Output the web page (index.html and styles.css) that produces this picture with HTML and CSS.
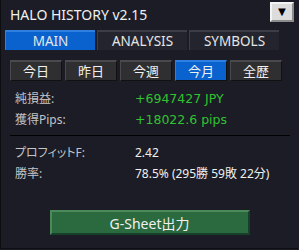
FILE: index.html
```html
<!DOCTYPE html>
<html lang="ja">
<head>
  <meta charset="UTF-8">
  <title>HALO HISTORY</title>
  <link rel="stylesheet" href="styles.css">
</head>
<body>
  <div class="panel">
    <div class="title-bar">
      <span class="title">HALO HISTORY v2.15</span>
      <button class="dropdown">&#9660;</button>
    </div>

    <!-- tabs -->
    <div class="tabs">
      <div class="tab active">MAIN</div>
      <div class="tab">ANALYSIS</div>
      <div class="tab">SYMBOLS</div>
    </div>

    <!-- period -->
    <div class="periods">
      <div class="period">今日</div>
      <div class="period">昨日</div>
      <div class="period">今週</div>
      <div class="period active">今月</div>
      <div class="period">全歴</div>
    </div>

    <div class="stats stats-top">
      <div class="row"><span class="label">純損益:</span><span class="value green">+6947427 JPY</span></div>
      <div class="row"><span class="label">獲得Pips:</span><span class="value green">+18022.6 pips</span></div>
    </div>
    <div class="divider"></div>
    <div class="stats">
      <div class="row"><span class="label">プロフィットF:</span><span class="value">2.42</span></div>
      <div class="row"><span class="label">勝率:</span><span class="value">78.5% (295勝 59敗 22分)</span></div>
    </div>

    <div class="footer">
      <button class="export">G-Sheet出力</button>
    </div>
  </div>
</body>
</html>
```

FILE: styles.css
```css
body {
  margin: 0;
  background: #1b1c25;
  font-family: "Noto Sans", "Noto Sans CJK JP", sans-serif;
  font-size: 12px;
  color: #e6e6e6;
}
.panel {
  width: 298px;
  height: 249px;
  box-sizing: border-box;
  border-left: 1px solid #0d0e12;
  border-bottom: 1px solid #0d0e12;
  background: #1b1c25;
  padding: 2px 4px 0 4px;
}
.title-bar {
  display: flex;
  justify-content: space-between;
  align-items: flex-start;
  height: 28px;
}
.title {
  margin: 3px 0 0 5px;
  font-size: 14px;
  color: #f0f0f0;
}
.dropdown {
  width: 24px;
  height: 20px;
  padding: 0;
  background: #dcdcdc;
  border: 2px solid;
  border-color: #f4f4f4 #8c8c8c #8c8c8c #f4f4f4;
  color: #000;
  font-size: 13px;
  line-height: 14px;
}
.tabs {
  display: flex;
  gap: 2px;
}
.tab {
  width: 90px;
  height: 20px;
  box-sizing: border-box;
  text-align: center;
  line-height: 18px;
  font-size: 13.5px;
  background: #23242e;
  border-top: 2px solid #3c3d46;
  border-left: 1px solid #3c3d46;
  color: #e6e6e6;
}
.tab.active {
  background: #0a62cf;
  border-color: #2f7fe0;
}
.periods {
  display: flex;
  gap: 3px;
  margin: 10px 0 0 5px;
}
.period {
  width: 52px;
  height: 21px;
  box-sizing: border-box;
  text-align: center;
  line-height: 18px;
  font-size: 13px;
  background: #2f2f31;
  border-top: 2px solid #4a4a4c;
  border-left: 1px solid #4a4a4c;
  border-bottom: 1px solid #111;
  border-right: 1px solid #111;
  color: #f0f0f0;
}
.period.active {
  background: #0a62cf;
  border-top-color: #2f7fe0;
  border-left-color: #2f7fe0;
}
.stats {
  padding-left: 10px;
}
.stats-top {
  margin-top: 7px;
}
.row {
  display: flex;
  height: 21px;
  line-height: 21px;
}
.label {
  width: 120px;
  color: #c4c4c8;
  font-feature-settings: "palt";
}
.value {
  color: #f0f0f0;
}
.value.green {
  color: #31c231;
  font-family: "DejaVu Sans", sans-serif;
  font-size: 12.5px;
}
.divider {
  height: 1px;
  background: #000;
  margin: 5px 4px 6px 5px;
}
.footer {
  display: flex;
  justify-content: center;
  margin-top: 26px;
}
.export {
  width: 200px;
  height: 25px;
  padding: 0;
  background: #2a6a3e;
  border: 2px solid;
  border-color: #4c8a5c #16402a #16402a #4c8a5c;
  color: #f0f0f0;
  font-family: inherit;
  font-size: 14px;
}
```
